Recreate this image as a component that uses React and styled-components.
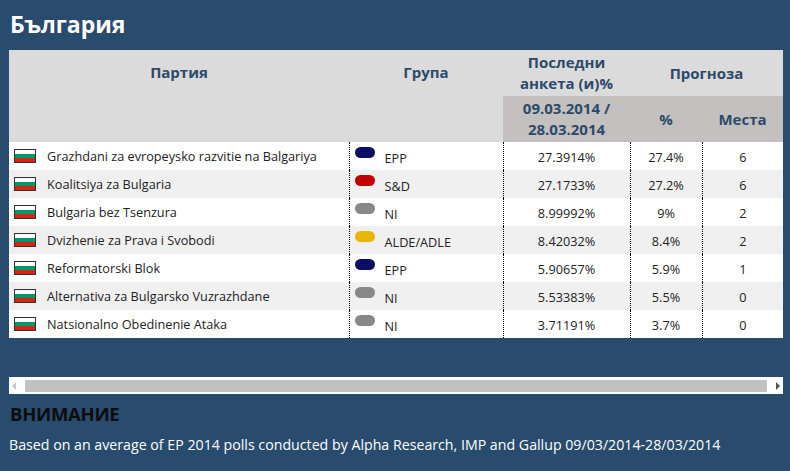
import React from 'react';
import styled, { createGlobalStyle } from 'styled-components';

const parties = [
  { name: 'Grazhdani za evropeysko razvitie na Balgariya', group: 'EPP', poll: '27.3914%', pct: '27.4%', seats: 6 },
  { name: 'Koalitsiya za Bulgaria', group: 'S&D', poll: '27.1733%', pct: '27.2%', seats: 6 },
  { name: 'Bulgaria bez Tsenzura', group: 'NI', poll: '8.99992%', pct: '9%', seats: 2 },
  { name: 'Dvizhenie za Prava i Svobodi', group: 'ALDE/ADLE', poll: '8.42032%', pct: '8.4%', seats: 2 },
  { name: 'Reformatorski Blok', group: 'EPP', poll: '5.90657%', pct: '5.9%', seats: 1 },
  { name: 'Alternativa za Bulgarsko Vuzrazhdane', group: 'NI', poll: '5.53383%', pct: '5.5%', seats: 0 },
  { name: 'Natsionalno Obedinenie Ataka', group: 'NI', poll: '3.71191%', pct: '3.7%', seats: 0 },
];

const groupColors = {
  EPP: '#0b0b68',
  'S&D': '#c10000',
  NI: '#888888',
  'ALDE/ADLE': '#e8b70a',
};

const GlobalStyle = createGlobalStyle`
  body {
    margin: 0;
    background: #294b6d;
    font-family: "Open Sans", "Noto Sans", sans-serif;
  }
`;

const Page = styled.div`
  padding: 7px 7px 0 9px;
  width: 774px;
`;

const Title = styled.h1`
  margin: 0 0 8px 1px;
  font-size: 23px;
  line-height: 35px;
  font-weight: 700;
  color: #fff;
`;

const Table = styled.table`
  width: 774px;
  border-collapse: collapse;
  table-layout: fixed;
  font-size: 12.7px;
  color: #222;
`;

const HeadCell = styled.th`
  background: ${(p) => (p.$dark ? '#c3c0bf' : '#dbdbdc')};
  color: #2d4a6a;
  font-size: 15px;
  font-weight: 700;
  line-height: 21px;
  height: 46px;
  padding: 0;
  text-align: center;
  vertical-align: ${(p) => (p.$top ? 'top' : 'middle')};
  padding-top: ${(p) => (p.$top ? '12px' : '0')};
`;

const Row = styled.tr`
  background: ${(p) => (p.$alt ? '#f0f0f0' : '#fff')};
  height: 28px;
`;

const Cell = styled.td`
  padding: 0;
  padding-top: 1px;
  text-align: ${(p) => (p.$left ? 'left' : 'center')};
  vertical-align: middle;
  border-left: ${(p) => (p.$divider ? '1px dotted #000' : 'none')};
`;

const PartyBox = styled.div`
  display: flex;
  align-items: center;
  gap: 11px;
  padding-left: 5px;
  padding-bottom: 2px;
`;

const Flag = styled.span`
  display: inline-block;
  width: 20px;
  height: 12px;
  border: 1px solid #333;
  background: linear-gradient(#fff 0 33%, #00966e 33% 66%, #d62612 66% 100%);
`;

const GroupBox = styled.div`
  display: flex;
  align-items: flex-start;
  gap: 10px;
  padding-left: 5px;
  margin-top: -1px;
`;

const Pill = styled.span`
  display: inline-block;
  width: 20px;
  height: 11px;
  border-radius: 6px;
  background: ${(p) => p.$color};
  margin-top: 1px;
`;

const GroupName = styled.span`
  line-height: 16px;
  padding-top: 4px;
`;

const Scrollbar = styled.div`
  margin-top: 39px;
  height: 17px;
  background: #fff;
  display: flex;
  align-items: center;
  padding: 0 3px;
  gap: 6px;
`;

const Arrow = styled.span`
  width: 0;
  height: 0;
  border-top: 4px solid transparent;
  border-bottom: 4px solid transparent;
  ${(p) => (p.$right ? 'border-left: 4px solid #555;' : 'border-right: 4px solid #c8c8c8;')}
`;

const Thumb = styled.div`
  flex: 1;
  height: 12px;
  background: #c1c1c1;
  margin: 0 3px;
`;

const Notice = styled.h2`
  margin: 8px 0 0 1px;
  font-size: 18.5px;
  line-height: 24px;
  font-weight: 700;
  color: #0d0d0d;
  letter-spacing: -0.3px;
`;

const Note = styled.p`
  margin: 9px 0 0 0;
  font-size: 14.2px;
  line-height: 19px;
  color: #fff;
`;

export default function App() {
  return (
    <>
      <GlobalStyle />
      <Page>
        <Title>България</Title>
        <Table>
          <colgroup>
            <col style={{ width: 340 }} />
            <col style={{ width: 154 }} />
            <col style={{ width: 127 }} />
            <col style={{ width: 72 }} />
            <col style={{ width: 81 }} />
          </colgroup>
          <thead>
            <tr>
              <HeadCell rowSpan={2} $top>Партия</HeadCell>
              <HeadCell rowSpan={2} $top>Група</HeadCell>
              <HeadCell>Последни<br />анкета (и)%</HeadCell>
              <HeadCell colSpan={2}>Прогноза</HeadCell>
            </tr>
            <tr>
              <HeadCell $dark>09.03.2014 /<br />28.03.2014</HeadCell>
              <HeadCell $dark>%</HeadCell>
              <HeadCell $dark>Места</HeadCell>
            </tr>
          </thead>
          <tbody>
            {parties.map((p, i) => (
              <Row key={p.name} $alt={i % 2 === 1}>
                <Cell $left>
                  <PartyBox>
                    <Flag />
                    {p.name}
                  </PartyBox>
                </Cell>
                <Cell $left $divider>
                  <GroupBox>
                    <Pill $color={groupColors[p.group]} />
                    <GroupName>{p.group}</GroupName>
                  </GroupBox>
                </Cell>
                <Cell $divider>{p.poll}</Cell>
                <Cell $divider>{p.pct}</Cell>
                <Cell $divider>{p.seats}</Cell>
              </Row>
            ))}
          </tbody>
        </Table>
        <Scrollbar>
          <Arrow />
          <Thumb />
          <Arrow $right />
        </Scrollbar>
        <Notice>ВНИМАНИЕ</Notice>
        <Note>
          Based on an average of EP 2014 polls conducted by Alpha Research, IMP and Gallup 09/03/2014-28/03/2014
        </Note>
      </Page>
    </>
  );
}
